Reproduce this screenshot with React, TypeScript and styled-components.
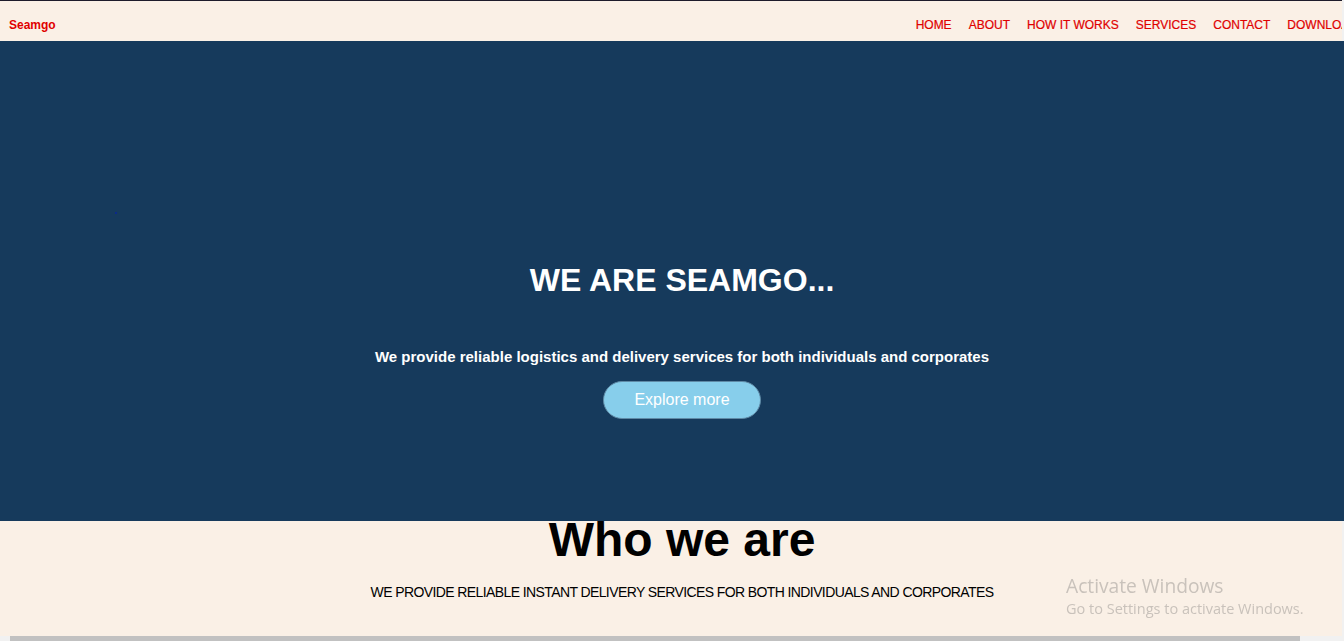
import React from "react";
import styled, { createGlobalStyle } from "styled-components";

const Global = createGlobalStyle`
  html, body { margin: 0; padding: 0; overflow: hidden; background: #faf0e6; }
  body { font-family: "Liberation Sans", Arial, sans-serif; }
  * { box-sizing: border-box; }
`;

const Page = styled.div`
  width: 1364px;
  height: 641px;
  background: #faf0e6;
  border-top: 1px solid #1d1b2b;
  display: flex;
  flex-direction: column;
`;

const Nav = styled.nav`
  height: 40px;
  display: flex;
  align-items: center;
  justify-content: space-between;
  padding: 7px 6px 0 9px;
  background: #faf0e6;
`;

const Brand = styled.div`
  color: #e00000;
  font-size: 12px;
  font-weight: 700;
`;

const Links = styled.ul`
  display: flex;
  gap: 17px;
  list-style: none;
  margin: 0;
  padding: 0;
`;

const Link = styled.li`
  color: #e00000;
  font-size: 12px;
  white-space: nowrap;
  -webkit-text-stroke: 0.2px #e00000;
`;

const Hero = styled.section`
  position: relative;
  z-index: 1;
  height: 480px;
  background: #163a5c;
  display: flex;
  flex-direction: column;
  align-items: center;
  padding-top: 221px;
`;

const Dot = styled.span`
  position: absolute;
  left: 115px;
  top: 171px;
  width: 2px;
  height: 2px;
  background: #0b2a8a;
`;

const HeroTitle = styled.h1`
  margin: 0;
  color: #ffffff;
  font-size: 32px;
  font-weight: 700;
`;

const HeroText = styled.p`
  margin: 49px 0 0;
  color: #ffffff;
  font-size: 15px;
  font-weight: 700;
`;

const Button = styled.button`
  margin-top: 16px;
  width: 158px;
  height: 38px;
  border-radius: 19px;
  border: 1px solid #5f8aa6;
  background: #87ceeb;
  color: #ffffff;
  font-family: "Liberation Sans", Arial, sans-serif;
  font-size: 16px;
`;

const About = styled.section`
  display: flex;
  flex-direction: column;
  align-items: center;
`;

const AboutTitle = styled.h2`
  margin: -9px 0 0;
  font-size: 48px;
  font-weight: 700;
  color: #000;
`;

const AboutText = styled.p`
  margin: 17px 0 0;
  font-size: 14px;
  letter-spacing: -0.6px;
  color: #000;
`;

const Watermark = styled.div`
  position: fixed;
  left: 1066px;
  top: 574px;
  color: #c9c2bb;
  font-family: "Open Sans", "Noto Sans", sans-serif;
  line-height: 1.2;
`;

const WmTitle = styled.div`
  font-size: 19.2px;
`;

const WmSub = styled.div`
  font-size: 14.5px;
  margin-top: 3px;
`;

const HScroll = styled.div`
  position: fixed;
  left: 0;
  bottom: 0;
  width: 100%;
  height: 5px;
  background: #f1f1f1;
  display: flex;
  padding-left: 10px;
`;

const HThumb = styled.div`
  width: 1290px;
  background: #c1c1c1;
`;

const VScroll = styled.div`
  position: fixed;
  right: 0;
  top: 0;
  width: 2px;
  height: 636px;
  background: #f1f1f1;
`;

export default function App() {
  const links = ["HOME", "ABOUT", "HOW IT WORKS", "SERVICES", "CONTACT", "DOWNLOAD"];
  return (
    <>
      <Global />
      <Page>
        <Nav>
          <Brand>Seamgo</Brand>
          <Links>
            {links.map((l) => (
              <Link key={l}>{l}</Link>
            ))}
          </Links>
        </Nav>
        <Hero>
          <Dot />
          <HeroTitle>WE ARE SEAMGO...</HeroTitle>
          <HeroText>We provide reliable logistics and delivery services for both individuals and corporates</HeroText>
          <Button>Explore more</Button>
        </Hero>
        <About>
          <AboutTitle>Who we are</AboutTitle>
          <AboutText>WE PROVIDE RELIABLE INSTANT DELIVERY SERVICES FOR BOTH INDIVIDUALS AND CORPORATES</AboutText>
        </About>
      </Page>
      <Watermark>
        <WmTitle>Activate Windows</WmTitle>
        <WmSub>Go to Settings to activate Windows.</WmSub>
      </Watermark>
      <VScroll />
      <HScroll>
        <HThumb />
      </HScroll>
    </>
  );
}
